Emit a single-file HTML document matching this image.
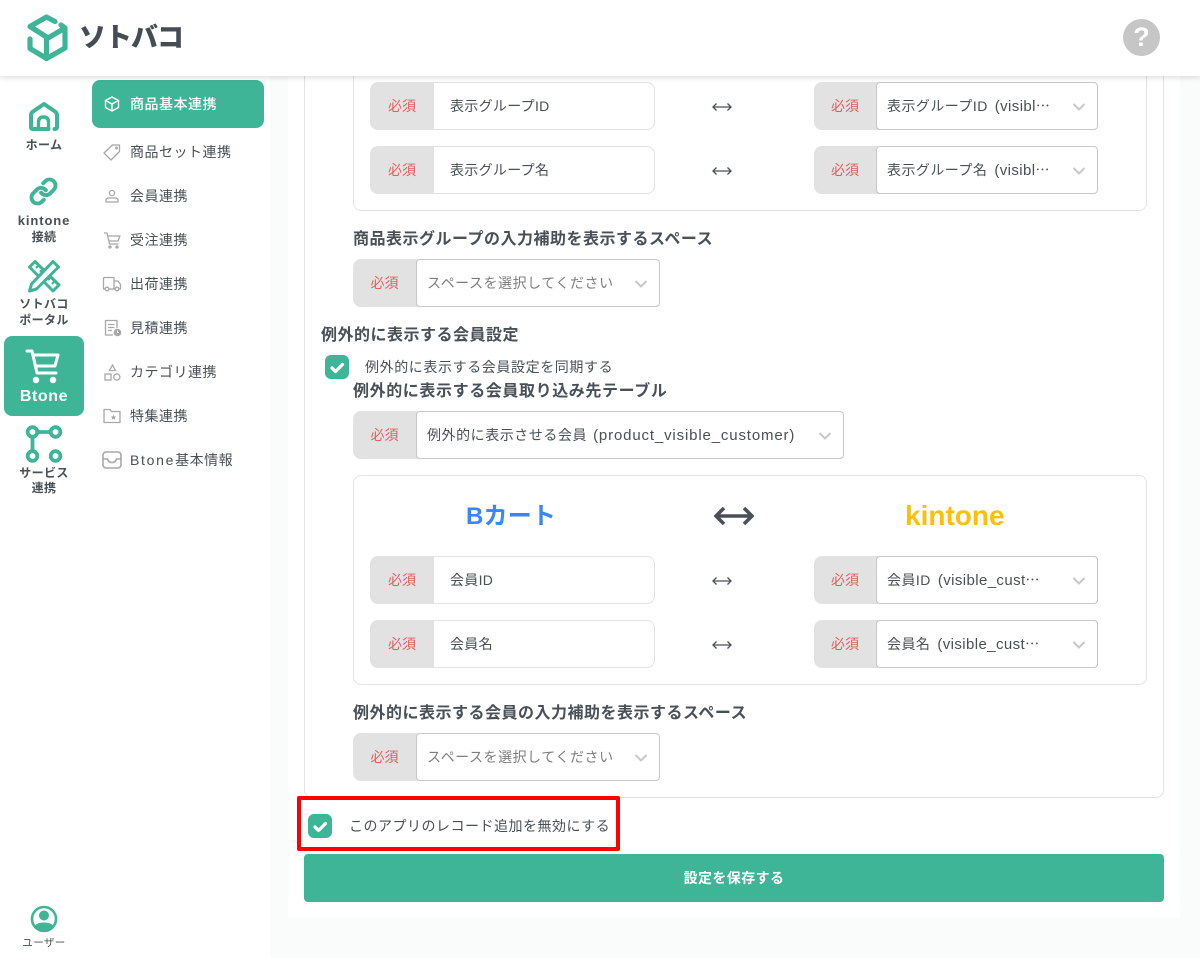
<!DOCTYPE html>
<html lang="ja"><head><meta charset="utf-8"><title>ソトバコ</title>
<style>
*{box-sizing:border-box}
html,body{margin:0;padding:0}
body{width:1200px;height:958px;position:relative;overflow:hidden;background:#fff;font-family:"Liberation Sans","Noto Sans CJK JP",sans-serif;color:#495057;font-size:14px}
.a{position:absolute;white-space:nowrap}
.hd{left:0;top:0;width:1200px;height:76px;background:#fff;box-shadow:0 1px 6px rgba(0,0,0,.16);z-index:5}
.nl{left:0;width:88px;text-align:center;font-size:12px;font-weight:700;line-height:16px;letter-spacing:.4px}
.sub{left:130px;font-size:14px;line-height:20px;letter-spacing:.5px}
.box{border:1px solid #e2e3e4;border-radius:8px;background:#fff}
.lb{background:#e2e2e2;color:#e0605c;height:48px;line-height:48px;text-align:center;border-radius:8px 0 0 8px;font-size:14px;padding-right:2px}
.inp{height:48px;background:#fff;border:1px solid #e2e3e4;border-left:0;border-radius:0 8px 8px 0;line-height:46px;padding-left:16px;letter-spacing:.3px}
.sel{height:48px;background:#fff;border:1px solid #c8c8c8;border-radius:4px;line-height:46px;padding-left:10px;letter-spacing:.45px}
.ph{color:#7f7f7f;letter-spacing:.55px}
.h{left:353px;font-size:16px;font-weight:700;line-height:22px;letter-spacing:.5px}
.ar{width:20px;height:10px}
.chk{width:24px;height:24px;background:#3fb597;border-radius:6px}
.ck{font-size:14px;line-height:20px;letter-spacing:.6px}
.l{font-size:15px;letter-spacing:.4px;margin-left:7px}
.d{font-family:"Noto Sans CJK JP",sans-serif;letter-spacing:0}
</style></head><body>

<div class="a" style="left:270px;top:0;width:930px;height:958px;background:#fafbfb"></div>
<div class="a" style="left:288px;top:76px;width:892px;height:842px;background:#fff"></div>
<div class="a box" style="left:304px;top:40px;width:860px;height:758px"></div>

<!-- header -->
<div class="a hd"></div>
<svg class="a" style="left:25px;top:12px;z-index:6" width="48" height="52" viewBox="0 0 48 52" fill="none" stroke="#3fb597" stroke-width="5.200" stroke-linejoin="round" stroke-linecap="round"><path d="M30 9.500L21.500 5L5 14.500L21.500 25V46.500"/><path d="M36 13L40 16L23 26M40 16V36L21.500 46.500L5 36.500V27"/></svg>
<div class="a" style="left:79px;top:19px;font-size:27px;line-height:38px;font-weight:900;color:#454d54;letter-spacing:-1px;z-index:6">ソトバコ</div>
<div class="a" style="left:1123px;top:19px;width:37px;height:37px;border-radius:50%;background:#c6c6c6;color:#fff;font-weight:700;font-size:27px;line-height:37px;text-align:center;z-index:6">?</div>

<!-- left nav -->
<svg class="a" style="left:27px;top:101px" width="34" height="32" viewBox="0 0 34 32" fill="none" stroke="#3fb597" stroke-width="4" stroke-linejoin="round" stroke-linecap="round"><path d="M21.500 28H6Q4 28 4 26V14Q4 12 6 10.500L17 3L28 10.500Q30 12 30 14V26Q30 28 27.500 28"/><path d="M11.500 28V21Q11.500 16 16.500 16Q21.500 16 21.500 21V28" stroke-width="3.400"/></svg>
<div class="a nl" style="top:137px">ホーム</div>
<svg class="a" style="left:29px;top:177px" width="29" height="29" viewBox="0 0 24 24" fill="none" stroke="#3fb597" stroke-width="3.200" stroke-linecap="round" stroke-linejoin="round"><path d="M10 13a5 5 0 0 0 7.540.540l3-3a5 5 0 0 0-7.070-7.070l-1.720 1.710"/><path d="M14 11a5 5 0 0 0-7.540-.540l-3 3a5 5 0 0 0 7.070 7.070l1.710-1.710"/></svg>
<div class="a nl" style="top:213px"><span style="font-size:13px;letter-spacing:.9px">kintone</span><br>接続</div>
<svg class="a" style="left:27px;top:259px" width="34" height="34" viewBox="0 0 34 34" fill="#fff" stroke="#3fb597" stroke-width="3" stroke-linejoin="round"><path d="M2.500 8L8 2.500L32 26L26 32Z"/><path d="M9 9L12 6M13 13L16 10M21 21L24 18M25 25L28 22" fill="none" stroke-width="2.200"/><path d="M26 2.500L31.500 8L9.500 30L2.500 32L4.500 25Z"/></svg>
<div class="a nl" style="top:296px">ソトバコ<br>ポータル</div>
<div class="a" style="left:4px;top:336px;width:80px;height:80px;background:#3fb597;border-radius:8px"></div>
<svg class="a" style="left:25px;top:349px" width="36" height="36" viewBox="0 0 36 36" fill="none" stroke="#fff" stroke-width="3" stroke-linejoin="round" stroke-linecap="round"><path d="M2 2H7L12 24H31"/><path d="M9 6H33L30 17H11"/><circle cx="11" cy="31" r="3.200" fill="#fff" stroke="none"/><circle cx="28" cy="31" r="3.200" fill="#fff" stroke="none"/></svg>
<div class="a nl" style="left:4px;width:80px;top:387px;color:#fff;font-size:16px;line-height:20px;letter-spacing:.6px">Btone</div>
<svg class="a" style="left:24px;top:424px" width="40" height="40" viewBox="0 0 40 40" fill="none" stroke="#3fb597" stroke-width="3.800"><circle cx="8.500" cy="8" r="4.800"/><circle cx="31.500" cy="8" r="4.800"/><circle cx="8.500" cy="32" r="4.800"/><circle cx="31.500" cy="32" r="4.800"/><path d="M13 8H27M8.500 12.500V27.500"/></svg>
<div class="a nl" style="top:465px">サービス<br><span style="position:relative;top:-1px">連携</span></div>
<svg class="a" style="left:30px;top:905px" width="28" height="28" viewBox="0 0 28 28"><circle cx="14" cy="14" r="12" fill="#fff" stroke="#3fb597" stroke-width="2.600"/><circle cx="14" cy="10.500" r="5" fill="#3fb597"/><path d="M4.500 21Q7 17.500 14 17.500Q21 17.500 23.500 21Q20 26 14 26Q8 26 4.500 21Z" fill="#3fb597"/></svg>
<div class="a nl" style="top:935px;font-size:10.500px;font-weight:400">ユーザー</div>

<!-- sub nav -->
<div class="a" style="left:92px;top:80px;width:172px;height:48px;background:#3fb597;border-radius:8px"></div>
<svg class="a" style="left:104px;top:96px" width="16" height="16" viewBox="0 0 16 16" fill="none" stroke="#fff" stroke-width="1.400" stroke-linejoin="round"><path d="M8 1L14.500 4.500V11.500L8 15L1.500 11.500V4.500Z"/><path d="M1.500 4.500L8 8L14.500 4.500M8 8V15"/></svg>
<div class="a sub" style="top:94px;color:#fff;font-weight:500">商品基本連携</div>
<svg class="a" style="left:103px;top:143px" width="18" height="18" viewBox="0 0 18 18" fill="none" stroke="#a6a8aa" stroke-width="1.300" stroke-linejoin="round"><path d="M1 10L9.500 2H16.500V8.500L8 17Z"/><circle cx="13.500" cy="5" r=".8"/></svg>
<div class="a sub" style="top:142px">商品セット連携</div>
<svg class="a" style="left:104px;top:188px" width="16" height="16" viewBox="0 0 16 16" fill="none" stroke="#a6a8aa" stroke-width="1.300"><circle cx="8" cy="5" r="2.600"/><path d="M2 14V12Q2 10 5 10H11Q14 10 14 12V14Z"/></svg>
<div class="a sub" style="top:186px">会員連携</div>
<svg class="a" style="left:103px;top:232px" width="18" height="17" viewBox="0 0 18 17" fill="none" stroke="#a6a8aa" stroke-width="1.300" stroke-linejoin="round"><path d="M1 1H4L6.500 12H15.500"/><path d="M4.500 4H17L15 9H5.500"/><circle cx="7" cy="15" r="1" fill="#a6a8aa"/><circle cx="14" cy="15" r="1" fill="#a6a8aa"/></svg>
<div class="a sub" style="top:230px">受注連携</div>
<svg class="a" style="left:102px;top:276px" width="20" height="16" viewBox="0 0 20 16" fill="none" stroke="#a6a8aa" stroke-width="1.300" stroke-linejoin="round"><path d="M3 13H1.500V2.500Q1.500 1.500 2.500 1.500H12V13H7"/><path d="M12 5H16L18.500 8.500V13H17M12 13H13"/><circle cx="5" cy="13" r="1.800"/><circle cx="15" cy="13" r="1.800"/></svg>
<div class="a sub" style="top:274px">出荷連携</div>
<svg class="a" style="left:103px;top:319px" width="19" height="18" viewBox="0 0 19 18" fill="none" stroke="#a6a8aa" stroke-width="1.300"><path d="M10 16H2.500V1.500H14V9"/><path d="M5 5.500H11.500M5 8.500H11.500M5 11.500H9"/><circle cx="14.500" cy="13.500" r="3.800" fill="#a6a8aa" stroke="none"/><path d="M14.500 11.500V13.500H16" stroke="#fff" stroke-width="1"/></svg>
<div class="a sub" style="top:318px">見積連携</div>
<svg class="a" style="left:104px;top:364px" width="17" height="17" viewBox="0 0 17 17" fill="none" stroke="#a6a8aa" stroke-width="1.300"><path d="M8.500 1L11.500 6.500H5.500Z"/><rect x="1" y="10" width="6" height="6"/><circle cx="12.800" cy="13" r="3.100"/></svg>
<div class="a sub" style="top:362px">カテゴリ連携</div>
<svg class="a" style="left:103px;top:408px" width="18" height="16" viewBox="0 0 18 16" fill="none" stroke="#a6a8aa" stroke-width="1.300" stroke-linejoin="round"><path d="M1 14.500V1.500H7L8.500 3.500H17V14.500Z"/><path d="M10.500 6.500L11.300 8.500L13.200 8.600L11.800 9.900L12.300 11.800L10.500 10.700L8.700 11.800L9.200 9.900L7.800 8.600L9.700 8.500Z" fill="#a6a8aa" stroke="none"/></svg>
<div class="a sub" style="top:406px">特集連携</div>
<svg class="a" style="left:102px;top:451px" width="20" height="18" viewBox="0 0 20 18" fill="none" stroke="#a6a8aa" stroke-width="1.600" stroke-linejoin="round"><rect x="1" y="1" width="18" height="16" rx="3"/><path d="M1 8H5.500Q6.500 11.500 10 11.500Q13.500 11.500 14.500 8H19"/></svg>
<div class="a sub" style="top:450px"><span style="letter-spacing:1.700px">Btone</span>基本情報</div>

<!-- panel 1 -->
<div class="a box" style="left:353px;top:40px;width:794px;height:171px"></div>

<div class="a lb" style="left:370px;top:82px;width:64px;padding:0">必須</div>
<div class="a inp" style="left:434px;top:82px;width:221px">表示グループID</div>
<svg class="a ar" style="left:712px;top:102px" viewBox="0 0 20 10" fill="none" stroke="#495057" stroke-width="1.300"><path d="M1 5H19M4.500 1.500L1 5L4.500 8.500M15.500 1.500L19 5L15.500 8.500"/></svg>
<div class="a lb" style="left:814px;top:82px;width:64px">必須</div>
<div class="a sel" style="left:876px;top:82px;width:222px">表示グループID<span class="l">(visibl</span><span class="d">…</span></div>
<svg class="a" style="left:1072px;top:103px" width="14" height="8" viewBox="0 0 14 8" fill="none" stroke="#c8c8c8" stroke-width="2"><path d="M1.500 1L7 6.500L12.500 1"/></svg>

<div class="a lb" style="left:370px;top:146px;width:64px;padding:0">必須</div>
<div class="a inp" style="left:434px;top:146px;width:221px">表示グループ名</div>
<svg class="a ar" style="left:712px;top:166px" viewBox="0 0 20 10" fill="none" stroke="#495057" stroke-width="1.300"><path d="M1 5H19M4.500 1.500L1 5L4.500 8.500M15.500 1.500L19 5L15.500 8.500"/></svg>
<div class="a lb" style="left:814px;top:146px;width:64px">必須</div>
<div class="a sel" style="left:876px;top:146px;width:222px">表示グループ名<span class="l">(visibl</span><span class="d">…</span></div>
<svg class="a" style="left:1072px;top:167px" width="14" height="8" viewBox="0 0 14 8" fill="none" stroke="#c8c8c8" stroke-width="2"><path d="M1.500 1L7 6.500L12.500 1"/></svg>

<div class="a h" style="top:229px">商品表示グループの入力補助を表示するスペース</div>
<div class="a lb" style="left:353px;top:259px;width:65px">必須</div>
<div class="a sel ph" style="left:416px;top:259px;width:244px">スペースを選択してください</div>
<svg class="a" style="left:634px;top:280px" width="14" height="8" viewBox="0 0 14 8" fill="none" stroke="#c8c8c8" stroke-width="2"><path d="M1.500 1L7 6.500L12.500 1"/></svg>

<div class="a h" style="left:321px;top:325px">例外的に表示する会員設定</div>
<div class="a chk" style="left:325px;top:355px"></div>
<svg class="a" style="left:325px;top:355px" width="24" height="24" viewBox="0 0 24 24" fill="none" stroke="#fff" stroke-width="3.200" stroke-linecap="round" stroke-linejoin="round"><path d="M7 13L10.500 16.500L17.500 9.500"/></svg>
<div class="a ck" style="left:365px;top:357px">例外的に表示する会員設定を同期する</div>
<div class="a h" style="top:381px;letter-spacing:.6px">例外的に表示する会員取り込み先テーブル</div>
<div class="a lb" style="left:353px;top:411px;width:65px">必須</div>
<div class="a sel" style="left:416px;top:411px;width:428px;letter-spacing:.55px">例外的に表示させる会員<span style="font-size:15px;letter-spacing:.85px;margin-left:6px">(product_visible_customer)</span></div>
<svg class="a" style="left:818px;top:432px" width="14" height="8" viewBox="0 0 14 8" fill="none" stroke="#c8c8c8" stroke-width="2"><path d="M1.500 1L7 6.500L12.500 1"/></svg>

<!-- panel 2 -->
<div class="a box" style="left:353px;top:475px;width:794px;height:210px"></div>
<div class="a" style="left:466px;top:499px;font-size:24px;line-height:36px;font-weight:700;color:#3b86f7;letter-spacing:.2px">Bカート</div>
<svg class="a" style="left:714px;top:505px" width="40" height="22" viewBox="0 0 40 22" fill="none" stroke="#495057" stroke-width="3.600"><path d="M2 11H38M10 3L2 11L10 19M30 3L38 11L30 19"/></svg>
<div class="a" style="left:905px;top:498px;font-size:28px;line-height:36px;font-weight:700;color:#fcbf0b">kintone</div>

<div class="a lb" style="left:370px;top:556px;width:64px;padding:0">必須</div>
<div class="a inp" style="left:434px;top:556px;width:221px">会員ID</div>
<svg class="a ar" style="left:712px;top:576px" viewBox="0 0 20 10" fill="none" stroke="#495057" stroke-width="1.300"><path d="M1 5H19M4.500 1.500L1 5L4.500 8.500M15.500 1.500L19 5L15.500 8.500"/></svg>
<div class="a lb" style="left:814px;top:556px;width:64px">必須</div>
<div class="a sel" style="left:876px;top:556px;width:222px">会員ID<span class="l">(visible_cust</span><span class="d">…</span></div>
<svg class="a" style="left:1072px;top:577px" width="14" height="8" viewBox="0 0 14 8" fill="none" stroke="#c8c8c8" stroke-width="2"><path d="M1.500 1L7 6.500L12.500 1"/></svg>

<div class="a lb" style="left:370px;top:620px;width:64px;padding:0">必須</div>
<div class="a inp" style="left:434px;top:620px;width:221px">会員名</div>
<svg class="a ar" style="left:712px;top:640px" viewBox="0 0 20 10" fill="none" stroke="#495057" stroke-width="1.300"><path d="M1 5H19M4.500 1.500L1 5L4.500 8.500M15.500 1.500L19 5L15.500 8.500"/></svg>
<div class="a lb" style="left:814px;top:620px;width:64px">必須</div>
<div class="a sel" style="left:876px;top:620px;width:222px">会員名<span class="l">(visible_cust</span><span class="d">…</span></div>
<svg class="a" style="left:1072px;top:641px" width="14" height="8" viewBox="0 0 14 8" fill="none" stroke="#c8c8c8" stroke-width="2"><path d="M1.500 1L7 6.500L12.500 1"/></svg>

<div class="a h" style="top:703px">例外的に表示する会員の入力補助を表示するスペース</div>
<div class="a lb" style="left:353px;top:733px;width:65px">必須</div>
<div class="a sel ph" style="left:416px;top:733px;width:244px">スペースを選択してください</div>
<svg class="a" style="left:634px;top:754px" width="14" height="8" viewBox="0 0 14 8" fill="none" stroke="#c8c8c8" stroke-width="2"><path d="M1.500 1L7 6.500L12.500 1"/></svg>

<!-- bottom -->
<div class="a" style="left:297px;top:796px;width:323px;height:55px;border:4px solid #f00;border-radius:2px;background:#fff"></div>
<div class="a chk" style="left:308px;top:814px"></div>
<svg class="a" style="left:308px;top:814px" width="24" height="24" viewBox="0 0 24 24" fill="none" stroke="#fff" stroke-width="3.200" stroke-linecap="round" stroke-linejoin="round"><path d="M7 13L10.500 16.500L17.500 9.500"/></svg>
<div class="a ck" style="left:349px;top:816px;letter-spacing:.5px">このアプリのレコード追加を無効にする</div>
<div class="a" style="left:304px;top:854px;width:860px;height:48px;background:#3fb597;border-radius:4px;color:#fff;font-weight:700;font-size:14px;line-height:48px;text-align:center;letter-spacing:.4px">設定を保存する</div>
</body></html>
